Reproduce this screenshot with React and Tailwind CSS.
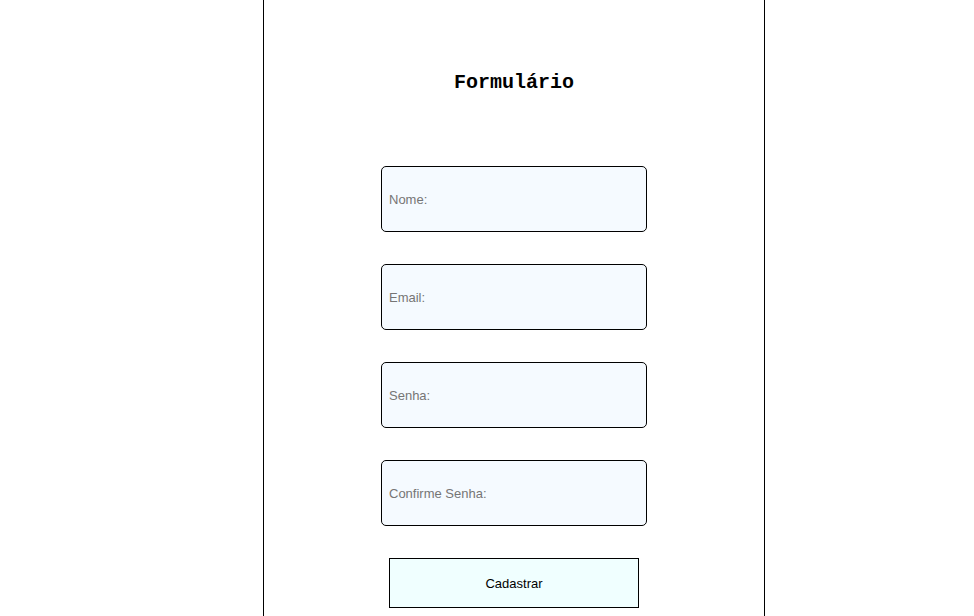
import React from "react";

const campos = ["Nome:", "Email:", "Senha:", "Confirme Senha:"];

const App = () => {
  return (
    <div className="min-h-screen bg-white">
      <div className="ml-[263px] w-[502px] min-h-screen border-x border-black flex flex-col items-center">
        <h1 className="pt-[71px] text-[20px] leading-[24px] font-bold text-black font-['Liberation_Mono',monospace]">
          Formulário
        </h1>

        <form className="mt-[71px] flex flex-col items-center gap-[32px]">
          {campos.map((campo) => (
            <input
              key={campo}
              type="text"
              placeholder={campo}
              className="w-[266px] h-[66px] px-[7px] bg-[#f5faff] border border-black rounded-[5px] text-[13px] font-['Liberation_Sans',Arial,sans-serif] text-black placeholder:text-[#757575] outline-none"
            />
          ))}
          <button
            type="button"
            className="w-[250px] h-[50px] pt-px bg-[#f0ffff] border border-black text-[13px] text-black font-['Liberation_Sans',Arial,sans-serif]"
          >
            Cadastrar
          </button>
        </form>
      </div>
    </div>
  );
};

export default App;
